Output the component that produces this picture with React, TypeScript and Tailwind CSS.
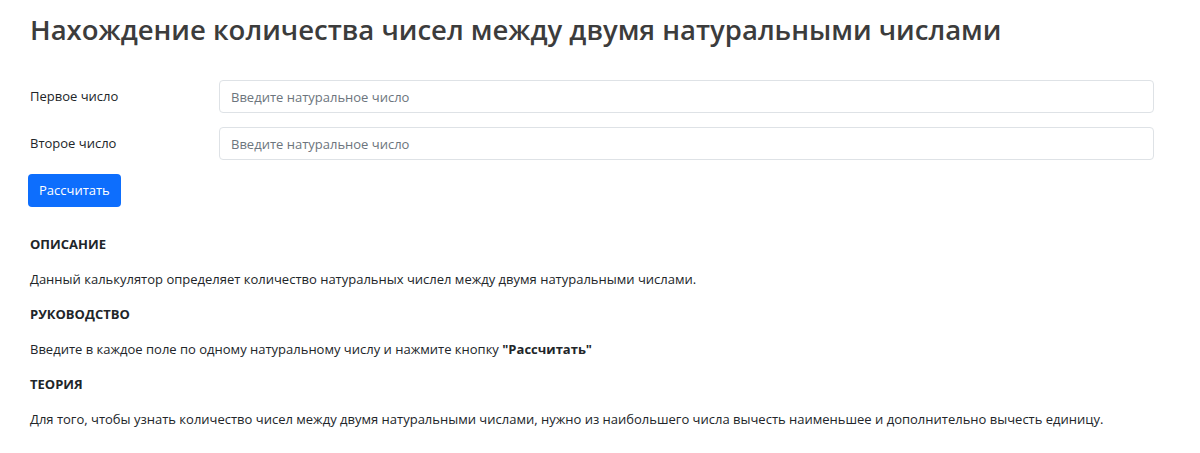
export default function App() {
  const font = { fontFamily: '"Open Sans", "Noto Sans", sans-serif' };
  return (
    <div className="bg-white text-[#212529] min-h-[453px] px-[30px] pt-[12px]" style={font}>
      <h1 className="text-[27.5px] font-semibold text-[#3c3c3c] leading-[36px] mb-[32px]">
        Нахождение количества чисел между двумя натуральными числами
      </h1>

      <div className="flex flex-col gap-[14px] w-[1124px]">
        <div className="flex items-center">
          <label className="w-[189px] text-[13px]">Первое число</label>
          <input
            className="flex-1 h-[33px] border border-[#dee2e6] rounded-[4px] px-[11px] text-[13px] placeholder:text-[#6c757d] outline-none"
            placeholder="Введите натуральное число"
          />
        </div>
        <div className="flex items-center">
          <label className="w-[189px] text-[13px]">Второе число</label>
          <input
            className="flex-1 h-[33px] border border-[#dee2e6] rounded-[4px] px-[11px] text-[13px] placeholder:text-[#6c757d] outline-none"
            placeholder="Введите натуральное число"
          />
        </div>
      </div>

      <button className="mt-[14px] ml-[-2px] h-[33px] px-[11px] bg-[#0d6efd] text-white text-[13px] rounded-[4px]">
        Рассчитать
      </button>

      <div className="mt-[27px] text-[13px] leading-[20px]">
        <h6 className="font-bold">ОПИСАНИЕ</h6>
        <p className="mt-[15px]">
          Данный калькулятор определяет количество натуральных числел между двумя натуральными числами.
        </p>
        <h6 className="font-bold mt-[15px]">РУКОВОДСТВО</h6>
        <p className="mt-[15px]">
          Введите в каждое поле по одному натуральному числу и нажмите кнопку <b>"Рассчитать"</b>
        </p>
        <h6 className="font-bold mt-[15px]">ТЕОРИЯ</h6>
        <p className="mt-[15px]">
          Для того, чтобы узнать количество чисел между двумя натуральными числами, нужно из наибольшего числа вычесть наименьшее и дополнительно вычесть единицу.
        </p>
      </div>
    </div>
  );
}
